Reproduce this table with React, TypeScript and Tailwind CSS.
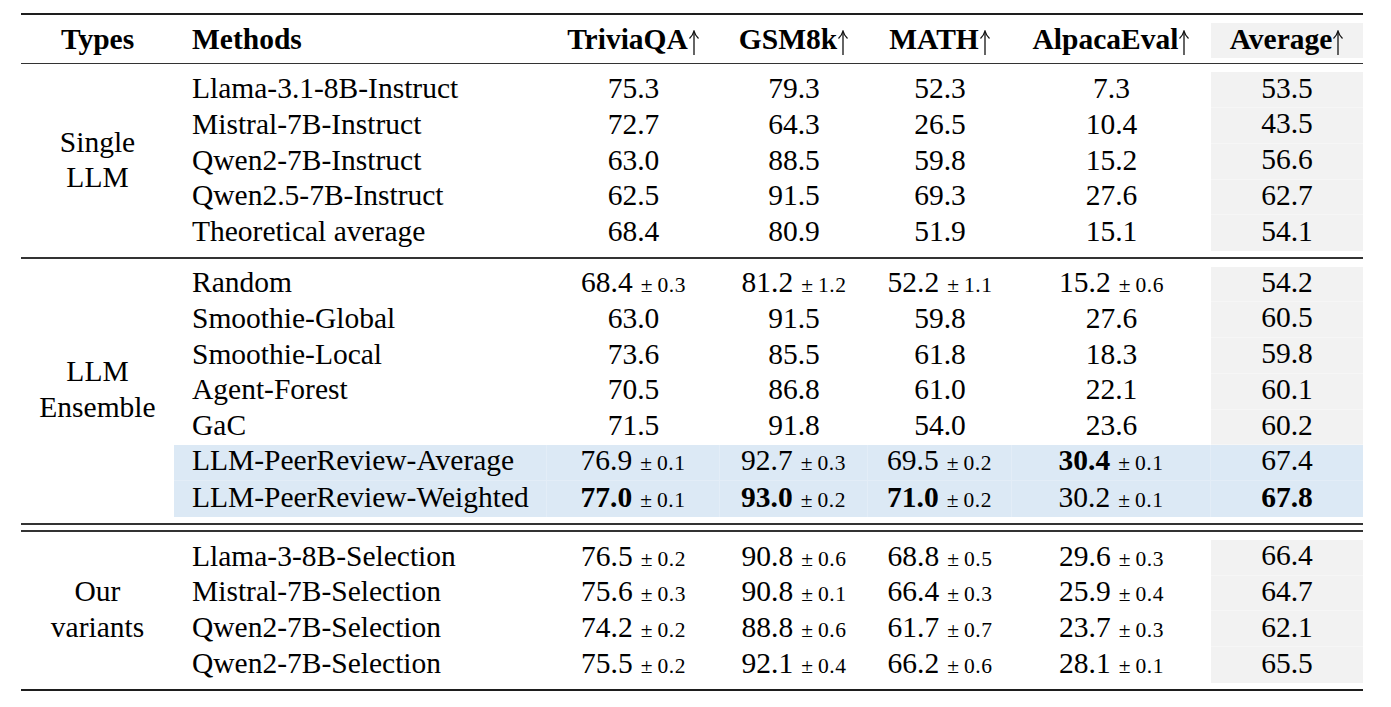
import React from "react";

type Cell = { v: string; pm?: string; b?: boolean };
type Row = { name: string; cells: Cell[]; hl?: boolean };
type Group = { label: string[]; rows: Row[] };

function c(s: string): Cell {
  const b = s.startsWith("*");
  const t = b ? s.slice(1) : s;
  const [v, pm] = t.split("|");
  return { v, pm, b };
}

function r(name: string, vals: string[], hl?: boolean): Row {
  return { name, cells: vals.map(c), hl };
}

const groups: Group[] = [
  {
    label: ["Single", "LLM"],
    rows: [
      r("Llama-3.1-8B-Instruct", ["75.3", "79.3", "52.3", "7.3", "53.5"]),
      r("Mistral-7B-Instruct", ["72.7", "64.3", "26.5", "10.4", "43.5"]),
      r("Qwen2-7B-Instruct", ["63.0", "88.5", "59.8", "15.2", "56.6"]),
      r("Qwen2.5-7B-Instruct", ["62.5", "91.5", "69.3", "27.6", "62.7"]),
      r("Theoretical average", ["68.4", "80.9", "51.9", "15.1", "54.1"]),
    ],
  },
  {
    label: ["LLM", "Ensemble"],
    rows: [
      r("Random", ["68.4|0.3", "81.2|1.2", "52.2|1.1", "15.2|0.6", "54.2"]),
      r("Smoothie-Global", ["63.0", "91.5", "59.8", "27.6", "60.5"]),
      r("Smoothie-Local", ["73.6", "85.5", "61.8", "18.3", "59.8"]),
      r("Agent-Forest", ["70.5", "86.8", "61.0", "22.1", "60.1"]),
      r("GaC", ["71.5", "91.8", "54.0", "23.6", "60.2"]),
      r("LLM-PeerReview-Average", ["76.9|0.1", "92.7|0.3", "69.5|0.2", "*30.4|0.1", "67.4"], true),
      r("LLM-PeerReview-Weighted", ["*77.0|0.1", "*93.0|0.2", "*71.0|0.2", "30.2|0.1", "*67.8"], true),
    ],
  },
  {
    label: ["Our", "variants"],
    rows: [
      r("Llama-3-8B-Selection", ["76.5|0.2", "90.8|0.6", "68.8|0.5", "29.6|0.3", "66.4"]),
      r("Mistral-7B-Selection", ["75.6|0.3", "90.8|0.1", "66.4|0.3", "25.9|0.4", "64.7"]),
      r("Qwen2-7B-Selection", ["74.2|0.2", "88.8|0.6", "61.7|0.7", "23.7|0.3", "62.1"]),
      r("Qwen2-7B-Selection", ["75.5|0.2", "92.1|0.4", "66.2|0.6", "28.1|0.1", "65.5"]),
    ],
  },
];

const valueWidths = ["w-[173px]", "w-[148px]", "w-[144px]", "w-[199px]", "w-[152px]"];

function UpArrow() {
  return (
    <svg
      className="inline-block align-[-6px]"
      width="12"
      height="25"
      viewBox="0 0 12 25"
      fill="none"
      stroke="#111"
      strokeWidth="1.3"
    >
      <path d="M6 1.5 V25" />
      <path d="M1.5 8.5 Q4.8 5.5 6 1.2 Q7.2 5.5 10.5 8.5" />
    </svg>
  );
}

function Value({ cell }: { cell: Cell }) {
  return (
    <span className="whitespace-nowrap">
      <span className={cell.b ? "font-bold" : ""}>{cell.v}</span>
      {cell.pm && (
        <span className="text-[21.5px] ml-[8px]">
          ±<span className="ml-[5px] tracking-[0.5px]">{cell.pm}</span>
        </span>
      )}
    </span>
  );
}

function DataRow({ row, last }: { row: Row; last: boolean }) {
  const hlCell = row.hl ? "bg-[#dce9f5] border-r border-[#e3edf7]" : "";
  const hlBottom = row.hl && !last ? "border-b border-b-[#e3edf7]" : "";
  return (
    <div className="flex h-[35.75px]">
      <div className={`w-[373px] pl-[18px] pb-[3px] flex items-center ${hlCell} ${hlBottom}`}>
        {row.name}
      </div>
      {row.cells.map((cell, i) => {
        const isAvg = i === 4;
        let bg = "";
        if (row.hl) {
          bg = `bg-[#dce9f5] ${isAvg ? "" : "border-r border-[#e3edf7]"} ${hlBottom}`;
        } else if (isAvg) {
          bg = `bg-[#f2f2f2] ${last ? "" : "border-b border-b-[#f6f6f6]"}`;
        }
        return (
          <div
            key={i}
            className={`${valueWidths[i]} pb-[3px] flex items-center justify-center ${bg}`}
          >
            <Value cell={cell} />
          </div>
        );
      })}
    </div>
  );
}

function GroupBlock({ g }: { g: Group }) {
  return (
    <div className="flex pt-[8px] pb-[6px]">
      <div className="w-[153px] flex flex-col items-center justify-center pb-[3px] leading-[35.75px] text-center">
        {g.label.map((l, i) => (
          <div key={i}>{l}</div>
        ))}
      </div>
      <div className="flex flex-col">
        {g.rows.map((row, i) => (
          <DataRow key={i} row={row} last={i === g.rows.length - 1} />
        ))}
      </div>
    </div>
  );
}

export default function App() {
  const headers = ["TriviaQA", "GSM8k", "MATH", "AlpacaEval"];
  return (
    <div className="w-[1391px] h-[707px] bg-white pt-[13px] pl-[21px] text-black font-['Liberation_Serif','Times_New_Roman',serif] text-[29.5px] leading-none">
      <div className="w-[1342px]">
        <div className="h-[2px] bg-[#1e1e1e]" />
        <div className="flex pt-[8px] pb-[5px] font-bold">
          <div className="w-[153px] h-[35px] pb-[1px] flex items-center justify-center">Types</div>
          <div className="w-[373px] h-[35px] pb-[1px] pl-[18px] flex items-center">Methods</div>
          {headers.map((h, i) => (
            <div key={h} className={`${valueWidths[i]} h-[35px] pb-[1px] flex items-center justify-center`}>
              <span className="whitespace-nowrap">
                {h}
                <UpArrow />
              </span>
            </div>
          ))}
          <div className="w-[152px] h-[35px] pb-[1px] flex items-center justify-center bg-[#f2f2f2]">
            <span className="whitespace-nowrap">
              Average
              <UpArrow />
            </span>
          </div>
        </div>
        <div className="h-[1.4px] bg-[#333]" />
        <GroupBlock g={groups[0]} />
        <div className="h-[1.4px] bg-[#333]" />
        <GroupBlock g={groups[1]} />
        <div className="h-[2px] bg-[#333]" />
        <div className="h-[5.6px]" />
        <div className="h-[1.6px] bg-[#333]" />
        <GroupBlock g={groups[2]} />
        <div className="h-[2px] bg-[#1e1e1e]" />
      </div>
    </div>
  );
}
